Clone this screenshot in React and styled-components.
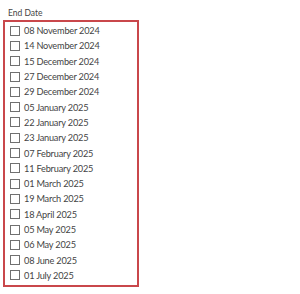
import React from "react";
import styled, { createGlobalStyle } from "styled-components";

const Global = createGlobalStyle`
  html, body { margin: 0; padding: 0; background: #fff; }
  body { font-family: "Segoe UI", Lato, "Open Sans", sans-serif; }
`;

const Wrap = styled.div`
  width: 300px;
  height: 294px;
  padding: 8px 0 0 3px;
  box-sizing: border-box;
`;

const Title = styled.div`
  font-size: 8.5px;
  color: #444;
  padding-left: 5px;
  height: 12px;
  line-height: 10px;
`;

const Box = styled.div`
  width: 136px;
  box-sizing: border-box;
  border: 2px solid #c9474b;
  padding: 1px 0 2px 5px;
  display: flex;
  flex-direction: column;
`;

const Row = styled.label`
  display: flex;
  align-items: center;
  height: 15.3px;
  gap: 4px;
  font-size: 9.2px;
  letter-spacing: -0.2px;
  color: #444;
  white-space: nowrap;
`;

const Check = styled.span`
  width: 8px;
  height: 8px;
  border: 1px solid #707070;
  background: #fff;
  flex: none;
`;

const dates = [
  "08 November 2024",
  "14 November 2024",
  "15 December 2024",
  "27 December 2024",
  "29 December 2024",
  "05 January 2025",
  "22 January 2025",
  "23 January 2025",
  "07 February 2025",
  "11 February 2025",
  "01 March 2025",
  "19 March 2025",
  "18 April 2025",
  "05 May 2025",
  "06 May 2025",
  "08 June 2025",
  "01 July 2025",
];

export default function App() {
  return (
    <Wrap>
      <Global />
      <Title>End Date</Title>
      <Box>
        {dates.map((d) => (
          <Row key={d}>
            <Check />
            {d}
          </Row>
        ))}
      </Box>
    </Wrap>
  );
}
